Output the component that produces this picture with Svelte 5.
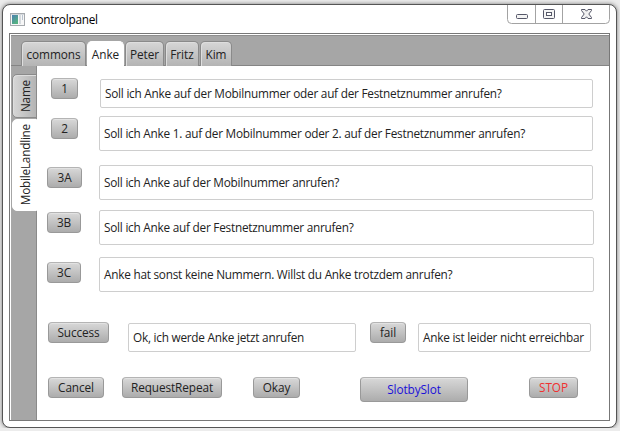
<script>
  const tabs = [
    { label: 'commons', w: 65 },
    { label: 'Anke', w: 37, active: true },
    { label: 'Peter', w: 39 },
    { label: 'Fritz', w: 34 },
    { label: 'Kim', w: 32 },
  ];
  // h: row height; left / w: button; shift, fx, fw, fh: text field
  const rows = [
    { label: '1', h: 40, left: 14, w: 27, shift: 1, fx: 22, fw: 493, fh: 29, text: 'Soll ich Anke auf der Mobilnummer oder auf der Festnetznummer anrufen?' },
    { label: '2', h: 49, left: 14, w: 27, shift: -2, fx: 21, fw: 494, fh: 35, text: 'Soll ich Anke 1. auf der Mobilnummer oder 2. auf der Festnetznummer anrufen?' },
    { label: '3A', h: 45, left: 10, w: 35, shift: -2, fx: 17, fw: 494, fh: 35, text: 'Soll ich Anke auf der Mobilnummer anrufen?' },
    { label: '3B', h: 50, left: 10, w: 34, shift: -2, fx: 18, fw: 495, fh: 35, text: 'Soll ich Anke auf der Festnetznummer anrufen?' },
    { label: '3C', h: 60, left: 10, w: 34, shift: -5, fx: 18, fw: 495, fh: 35, text: 'Anke hat sonst keine Nummern. Willst du Anke trotzdem anrufen?' },
  ];
</script>

<div class="window">
  <header>
    <svg class="app" width="15" height="13" viewBox="0 0 15 13">
      <defs>
        <linearGradient id="ag" x1="0" y1="0" x2="0.6" y2="1">
          <stop offset="0" stop-color="#4c7fb0" /><stop offset="1" stop-color="#55b381" />
        </linearGradient>
      </defs>
      <rect x=".5" y=".5" width="14" height="12" fill="#f7f7f7" stroke="#a5a9ad" />
      <rect x="1" y="1" width="13" height="1" fill="#d5d9dd" />
      <rect x="2" y="2" width="6" height="9" fill="url(#ag)" />
      <rect x="9" y="2" width="2" height="9" fill="#d5dade" />
      <rect x="12" y="2" width="1" height="5" fill="#b9c4d0" />
    </svg>
    <span class="title">controlpanel</span>
    <svg class="controls" width="103" height="20" viewBox="0 0 103 20">
      <path d="M.5 0V14.500Q.5 18.500 4.500 18.500H98.500Q102.500 18.500 102.500 14.500V0M28.500 0V18M55.500 0V18" fill="none" stroke="#a3a3a3" />
      <rect x="9.500" y="9.500" width="11" height="4" rx="1" fill="#f4f4f4" stroke="#555768" />
      <rect x="36.500" y="4.500" width="11" height="9" rx="1" fill="#f4f4f4" stroke="#555768" />
      <rect x="39.500" y="7.500" width="5" height="3" fill="#fff" stroke="#555768" />
      <path d="M74.500 4.500H78L79.500 6.200L81 4.500H84.500V5.500L81.800 9L84.500 12.500V13.500H81L79.500 11.800L78 13.500H74.500V12.500L77.200 9L74.500 5.500Z" fill="#f1f1f1" stroke="#555768" />
    </svg>
  </header>

  <div class="client">
    <nav class="top">
      {#each tabs as t}
        <div class="tab" class:active={t.active} style:width="{t.w}px">{t.label}</div>
      {/each}
    </nav>
    <div class="body">
      <nav class="side">
        <div class="vtab name"><span>Name</span></div>
        <div class="vtab mobile active"><span>MobileLandline</span></div>
      </nav>
      <main>
        {#each rows as r}
          <div class="row" style:height="{r.h}px">
            <button style:margin-left="{r.left}px" style:width="{r.w}px">{r.label}</button>
            <div class="field" style:margin-left="{r.fx}px" style:margin-top="{r.shift}px" style:width="{r.fw}px" style:height="{r.fh}px">{r.text}</div>
          </div>
        {/each}
        <div class="row results">
          <button class="success">Success</button>
          <div class="field ok">Ok, ich werde Anke jetzt anrufen</div>
          <button class="fail">fail</button>
          <div class="field unreachable">Anke ist leider nicht erreichbar</div>
        </div>
        <div class="row">
          <button class="cancel">Cancel</button>
          <button class="repeat">RequestRepeat</button>
          <button class="okay">Okay</button>
          <button class="slot">SlotbySlot</button>
          <button class="stop">STOP</button>
        </div>
      </main>
    </div>
  </div>
</div>

<style>
  :global(body) { background: #ececec; overflow: hidden; }
  * { box-sizing: border-box; }
  .window {
    width: 615px; height: 424px; margin: 4px 0 0 2px; padding: 0 6px;
    border: 1px solid #555; border-radius: 8px; background: #fff;
    box-shadow: 0 0 4px #777;
    font: 11.8px/16px "Open Sans", "Noto Sans", sans-serif; letter-spacing: -0.24px; color: #222;
  }
  header { display: flex; height: 28px; padding-left: 1px; }
  .app { margin: 8px 0 0; }
  .title { margin: 6px 0 0 6px; color: #000; }
  .controls { margin: 0 0 0 auto; }
  .client {
    width: 601px; height: 388px; border: 1px solid #777;
    padding: 1px 0 0 1px;
  }
  .top {
    display: flex; gap: 1px; height: 31px; padding: 5px 0 0 10px;
    background: #a6a6a6; border-bottom: 1px solid #858585; border-top: 1px solid #8e8e8e;
  }
  .tab {
    height: 25px; padding-top: 4px; text-align: center; white-space: nowrap; letter-spacing: -0.05px;
    border: 1px solid #8a8a8a; border-bottom: 0; border-radius: 5px 5px 0 0;
    background: linear-gradient(#d6d6d6, #b4b4b4);
    box-shadow: inset 1px 1px #dedede;
  }
  .tab.active, .vtab.active { background: #fff; border-color: #fff; box-shadow: none; }
  .tab.active { height: 26px; }
  .body { display: flex; height: 354px; }
  .side { width: 26px; padding: 8px 0 0 1px; background: #a6a6a6; border-right: 1px solid #8a8a8a; }
  .vtab {
    display: flex; align-items: center; justify-content: center; width: 25px;
    border: 1px solid #8a8a8a; border-radius: 5px 0 0 5px;
    background: linear-gradient(90deg, #d6d6d6, #b4b4b4);
    box-shadow: inset 1px 1px #dedede;
  }
  .vtab span { writing-mode: vertical-rl; transform: rotate(180deg); }
  .name { height: 44px; }
  .mobile { height: 92px; margin-top: 1px; }
  main { flex: 1; padding-top: 12px; }
  .row { display: flex; align-items: flex-start; }
  button {
    flex: none; height: 21px; padding: 0 0 2px; font: inherit; letter-spacing: -0.1px; color: #222; white-space: nowrap;
    border: 1px solid #999; border-top-color: #b4b4b4; border-radius: 4px;
    background: linear-gradient(#d8d8d8, #acacac);
    box-shadow: inset 0 1px #e2e2e2;
  }
  .field {
    flex: none; display: flex; align-items: center; padding: 0 0 2px 4px;
    white-space: nowrap; border: 1px solid #cecece; border-radius: 2px; background: #fff;
  }
  .results { height: 55px; }
  .results .field { height: 29px; margin-top: 1px; }
  .success { width: 61px; margin-left: 11px; }
  .ok { width: 228px; margin-left: 19px; }
  .fail { width: 36px; margin-left: 14px; }
  .unreachable { width: 173px; margin-left: 12px; }
  .cancel { width: 56px; margin-left: 11px; }
  .repeat { width: 100px; margin-left: 18px; }
  .okay { width: 47px; margin-left: 31px; }
  .slot { width: 108px; height: 25px; margin-left: 60px; color: #1a0fd8; }
  .stop { width: 49px; margin-left: 61px; color: #f03030; }
</style>
